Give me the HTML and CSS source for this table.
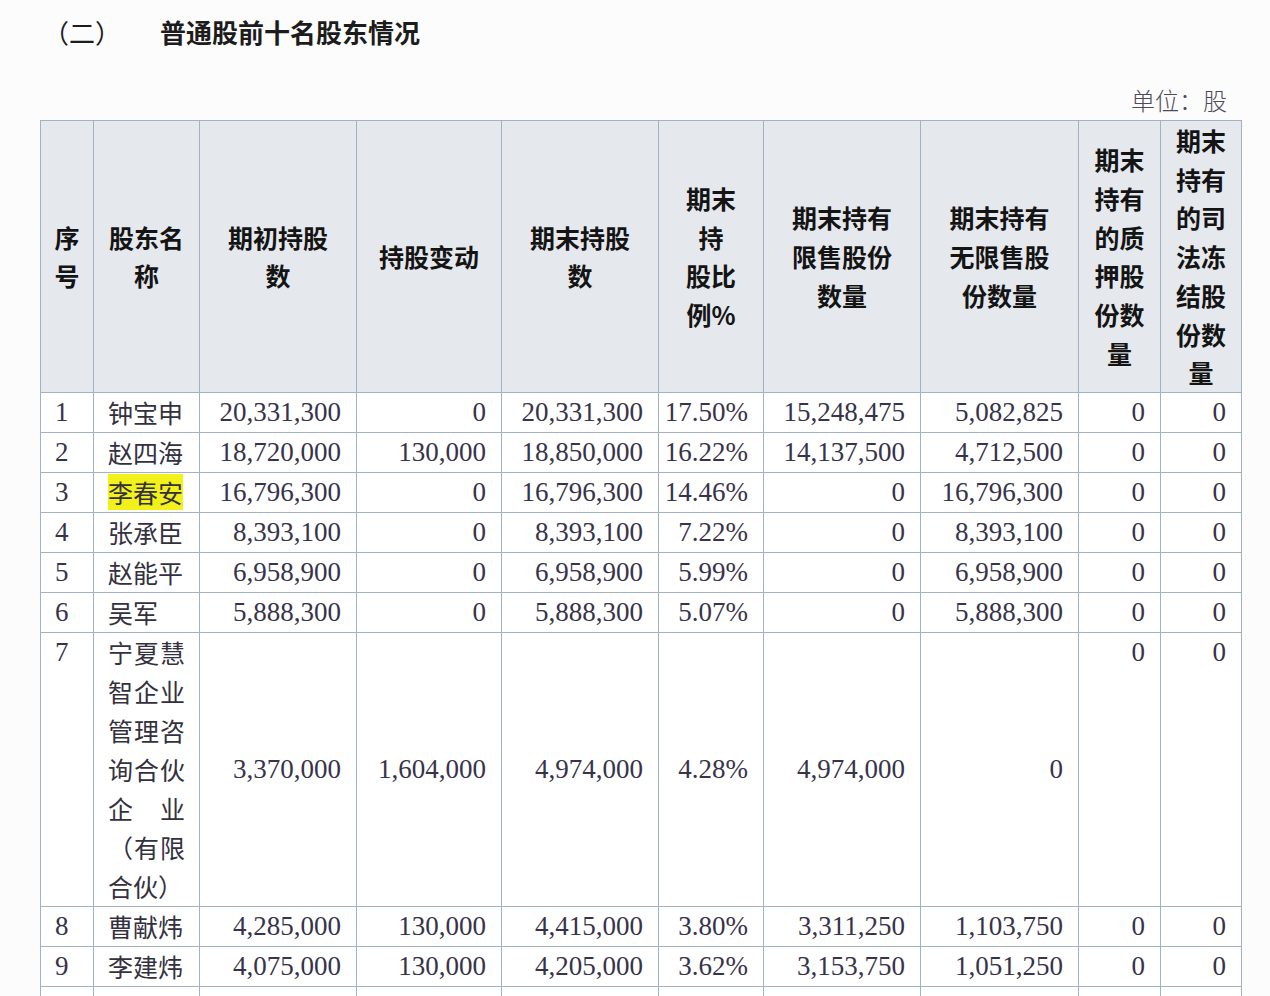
FILE: index.html
```html
<!DOCTYPE html>
<html lang="zh-CN">
<head>
<meta charset="utf-8">
<title>普通股前十名股东情况</title>
<link rel="stylesheet" href="styles.css">
</head>
<body>
<div class="page">
  <h1 class="title"><span class="title-num">（二）</span><span class="title-text">普通股前十名股东情况</span></h1>
  <div class="unit">单位：股</div>
  <table class="holders">
    <colgroup>
      <col class="c1"><col class="c2"><col class="c3"><col class="c4"><col class="c5">
      <col class="c6"><col class="c7"><col class="c8"><col class="c9"><col class="c10">
    </colgroup>
    <thead>
      <tr>
        <th>序<br>号</th>
        <th>股东名<br>称</th>
        <th>期初持股<br>数</th>
        <th>持股变动</th>
        <th>期末持股<br>数</th>
        <th>期末<br>持<br>股比<br>例%</th>
        <th>期末持有<br>限售股份<br>数量</th>
        <th>期末持有<br>无限售股<br>份数量</th>
        <th>期末<br>持有<br>的质<br>押股<br>份数<br>量</th>
        <th>期末<br>持有<br>的司<br>法冻<br>结股<br>份数<br>量</th>
      </tr>
    </thead>
    <tbody>
      <tr>
        <td class="idx">1</td><td class="name">钟宝申</td>
        <td class="n">20,331,300</td><td class="n">0</td><td class="n">20,331,300</td><td class="n">17.50%</td>
        <td class="n">15,248,475</td><td class="n">5,082,825</td><td class="z">0</td><td class="z">0</td>
      </tr>
      <tr>
        <td class="idx">2</td><td class="name">赵四海</td>
        <td class="n">18,720,000</td><td class="n">130,000</td><td class="n">18,850,000</td><td class="n">16.22%</td>
        <td class="n">14,137,500</td><td class="n">4,712,500</td><td class="z">0</td><td class="z">0</td>
      </tr>
      <tr>
        <td class="idx">3</td><td class="name"><span class="mark">李春安</span></td>
        <td class="n">16,796,300</td><td class="n">0</td><td class="n">16,796,300</td><td class="n">14.46%</td>
        <td class="n">0</td><td class="n">16,796,300</td><td class="z">0</td><td class="z">0</td>
      </tr>
      <tr>
        <td class="idx">4</td><td class="name">张承臣</td>
        <td class="n">8,393,100</td><td class="n">0</td><td class="n">8,393,100</td><td class="n">7.22%</td>
        <td class="n">0</td><td class="n">8,393,100</td><td class="z">0</td><td class="z">0</td>
      </tr>
      <tr>
        <td class="idx">5</td><td class="name">赵能平</td>
        <td class="n">6,958,900</td><td class="n">0</td><td class="n">6,958,900</td><td class="n">5.99%</td>
        <td class="n">0</td><td class="n">6,958,900</td><td class="z">0</td><td class="z">0</td>
      </tr>
      <tr>
        <td class="idx">6</td><td class="name">吴军</td>
        <td class="n">5,888,300</td><td class="n">0</td><td class="n">5,888,300</td><td class="n">5.07%</td>
        <td class="n">0</td><td class="n">5,888,300</td><td class="z">0</td><td class="z">0</td>
      </tr>
      <tr class="tall">
        <td class="idx">7</td><td class="name">宁夏慧智企业管理咨询合伙企业（有限合伙）</td>
        <td class="n">3,370,000</td><td class="n">1,604,000</td><td class="n">4,974,000</td><td class="n">4.28%</td>
        <td class="n">4,974,000</td><td class="n">0</td><td class="z">0</td><td class="z">0</td>
      </tr>
      <tr>
        <td class="idx">8</td><td class="name">曹献炜</td>
        <td class="n">4,285,000</td><td class="n">130,000</td><td class="n">4,415,000</td><td class="n">3.80%</td>
        <td class="n">3,311,250</td><td class="n">1,103,750</td><td class="z">0</td><td class="z">0</td>
      </tr>
      <tr>
        <td class="idx">9</td><td class="name">李建炜</td>
        <td class="n">4,075,000</td><td class="n">130,000</td><td class="n">4,205,000</td><td class="n">3.62%</td>
        <td class="n">3,153,750</td><td class="n">1,051,250</td><td class="z">0</td><td class="z">0</td>
      </tr>
      <tr class="cut">
        <td class="idx"></td><td class="name"></td>
        <td class="n"></td><td class="n"></td><td class="n"></td><td class="n"></td>
        <td class="n"></td><td class="n"></td><td class="z"></td><td class="z"></td>
      </tr>
    </tbody>
  </table>
</div>
</body>
</html>
```

FILE: styles.css
```css
html, body {
  margin: 0;
  padding: 0;
  background: #fcfcfd;
}

.page {
  width: 1270px;
  padding-top: 12px;
  font-family: "Noto Sans CJK SC", "Liberation Sans", sans-serif;
  color: #1a1a1a;
}

.title {
  margin: 0;
  padding-left: 43px;
  height: 40px;
  line-height: 40px;
  font-size: 26px;
  display: flex;
  gap: 39px;
  color: #1c1c1c;
}

.title-num {
  font-weight: 400;
}

.title-text {
  font-weight: 700;
}

.unit {
  margin: 33px 0 5px;
  padding-right: 43px;
  text-align: right;
  font-size: 24px;
  line-height: 30px;
  color: #4f4a5a;
  font-weight: 300;
}

.holders {
  margin-left: 40px;
  width: 1201px;
  table-layout: fixed;
  border-collapse: collapse;
  background: #ffffff;
}

.c1 { width: 53px; }
.c2 { width: 106px; }
.c3 { width: 157px; }
.c4 { width: 145px; }
.c5 { width: 157px; }
.c6 { width: 105px; }
.c7 { width: 157px; }
.c8 { width: 158px; }
.c9 { width: 82px; }
.c10 { width: 81px; }

.holders th,
.holders td {
  border: 1px solid #a3b2c3;
  padding: 0;
}

.holders th {
  background: #e5e8ed;
  font-family: "Noto Sans CJK SC", sans-serif;
  font-weight: 700;
  font-size: 25px;
  line-height: 38.7px;
  color: #141414;
  text-align: center;
  vertical-align: middle;
}

.holders td {
  font-family: "Liberation Serif", "Noto Sans CJK SC", serif;
  font-size: 27px;
  line-height: 39px;
  color: #37334a;
  vertical-align: middle;
  white-space: nowrap;
}

.holders td.idx {
  padding-left: 14px;
  text-align: left;
}

.holders td.name {
  padding: 0 14px;
  font-family: "Noto Sans CJK SC", sans-serif;
  font-size: 25px;
  text-align: justify;
  white-space: normal;
  color: #34313f;
}

.holders td.n,
.holders td.z {
  padding-right: 15px;
  text-align: right;
}

.holders tr.tall td.idx,
.holders tr.tall td.name,
.holders tr.tall td.z {
  vertical-align: top;
}

.mark {
  background: #f2f21a;
}

.holders tr.cut td {
  height: 39px;
}
```
